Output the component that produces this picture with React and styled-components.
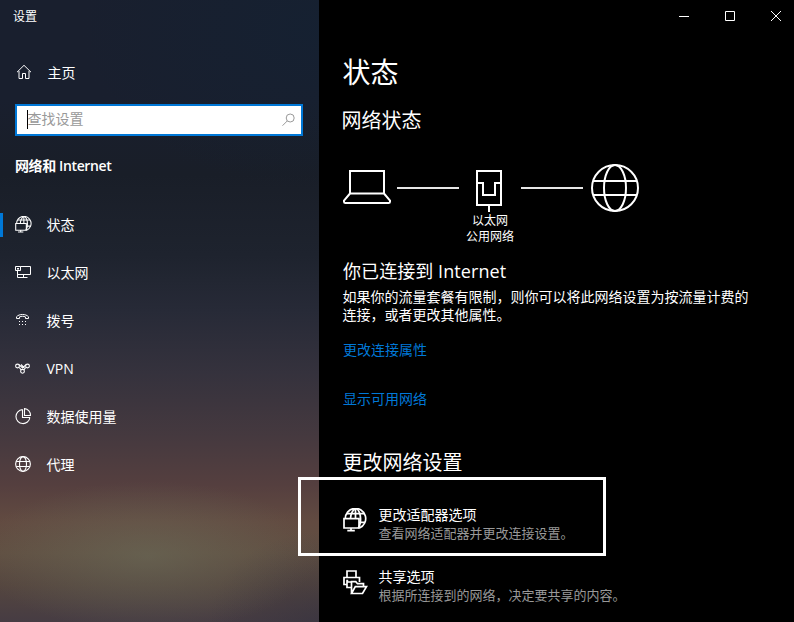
import React from "react";
import styled, { createGlobalStyle } from "styled-components";

const GlobalStyle = createGlobalStyle`
  * { box-sizing: border-box; }
  body {
    margin: 0;
    background: #000;
    overflow: hidden;
    font-family: "Open Sans", "Noto Sans CJK SC", sans-serif;
    color: #fff;
  }
  h1, h2, h3, p { margin: 0; font-weight: 400; }
`;

const Window = styled.div`
  position: relative;
  display: flex;
  width: 794px;
  height: 622px;
  overflow: hidden;
  background: #000;
`;

const Sidebar = styled.aside`
  width: 319px;
  height: 622px;
  flex: none;
  display: flex;
  flex-direction: column;
  background:
    radial-gradient(ellipse 170px 75px at 148px 556px, rgba(108, 112, 92, 0.5), rgba(108, 112, 92, 0)),
    radial-gradient(ellipse 240px 160px at 319px 30px, rgba(16, 35, 54, 0.4), rgba(16, 35, 54, 0)),
    radial-gradient(ellipse 110px 90px at 319px 622px, rgba(50, 48, 62, 0.5), rgba(50, 48, 62, 0)),
    linear-gradient(180deg, #191f2e 0%, #191f2e 16%, #191e28 28%, #1e232e 41%, #272a37 50%, #35323d 60%, #45393f 70%, #553f3f 78%, #624b41 84%, #604f42 89%, #55463f 94%, #463c43 100%);
`;

const WindowTitle = styled.div`
  height: 34px;
  padding-left: 13px;
  font-size: 12px;
  line-height: 33px;
`;

const NavItem = styled.div`
  display: flex;
  align-items: center;
  height: 48px;
  border-left: 3px solid transparent;
  padding-left: 12px;
  font-size: 14px;
  line-height: 20px;
`;

const HomeItem = styled(NavItem)`
  height: 40px;
  margin-top: 19px;
  padding-left: 13px;
`;

const ActiveMark = styled.span`
  width: 3px;
  height: 24px;
  margin-left: -15px;
  margin-right: 12px;
  margin-top: -1px;
  background: #0078d7;
`;

const NavIcon = styled.span`
  display: flex;
  width: 31.5px;
  height: 18px;
`;

const SearchBox = styled.div`
  display: flex;
  align-items: center;
  width: 288px;
  height: 32px;
  margin: 11px 0 0 15px;
  padding: 0 6px 0 10px;
  border: 2px solid #0078d7;
  background: #fff;
  color: #999;
  font-size: 14px;
`;

const Caret = styled.span`
  width: 1px;
  height: 19px;
  margin-top: -1px;
  background: #000;
`;

const Placeholder = styled.span`
  flex: 1;
  line-height: 26px;
  margin: -2px 0 0 -0.5px;
`;

const Category = styled.div`
  height: 65px;
  padding: 20px 0 0 15px;
  font-size: 14px;
  line-height: 20px;
  font-weight: 600;
  letter-spacing: -0.38px;
`;

const Nav = styled.nav`
  display: flex;
  flex-direction: column;
`;

const Main = styled.main`
  flex: 1;
  display: flex;
  flex-direction: column;
`;

const TitleBar = styled.div`
  display: flex;
  justify-content: flex-end;
  height: 32px;
  margin-right: -5px;
`;

const CaptionButton = styled.span`
  display: flex;
  align-items: center;
  justify-content: center;
  width: 46px;
  height: 32px;
`;

const Content = styled.div`
  display: flex;
  flex-direction: column;
  padding-left: 24px;
`;

const PageTitle = styled.h1`
  margin: 20px 0 0 -0.5px;
  font-size: 28px;
  line-height: 40px;
`;

const SectionTitle = styled.h2`
  height: 28px;
  margin: ${(p) => p.$gap}px 0 0 ${(p) => p.$shift || 0}px;
  font-size: 20px;
  line-height: 28px;
`;

const Diagram = styled.div`
  display: flex;
  align-items: flex-start;
  height: 94px;
  margin-top: 29px;
`;

const Link = styled.span`
  width: 62px;
  height: 2px;
  margin: 23px 0 0 ${(p) => p.$before || 0}px;
  background: #e6e6e6;
`;

const Adapter = styled.div`
  display: flex;
  flex-direction: column;
  align-items: center;
  width: 60px;
  margin-right: 2px;
  font-size: 12px;
  line-height: 16px;
  white-space: nowrap;
  text-align: center;
`;

const AdapterLabel = styled.span`
  margin: 1px 0 0 2px;
`;

const GlobeSlot = styled.span`
  display: flex;
  margin-left: 8px;
`;

const Subtitle = styled.h3`
  height: 26px;
  font-size: 18px;
  line-height: 26px;
  letter-spacing: 0.07px;
`;

const Body = styled.p`
  margin: 4px 0 0 -0.5px;
  font-size: 14px;
  line-height: 18px;
`;

const TextLink = styled.a`
  height: 20px;
  margin-top: ${(p) => p.$gap}px;
  color: #0078d7;
  font-size: 14px;
  line-height: 20px;
`;

const Options = styled.div`
  display: flex;
  flex-direction: column;
  gap: 26px;
  margin-top: 29px;
`;

const Option = styled.div`
  display: flex;
  height: 36px;
`;

const OptionIcon = styled.span`
  display: flex;
  width: 35.5px;
  padding-top: 2px;
`;

const OptionText = styled.div`
  display: flex;
  flex-direction: column;
`;

const OptionName = styled.span`
  font-size: 14px;
  line-height: 18px;
`;

const OptionNote = styled.span`
  color: #999;
  font-size: 13px;
  line-height: 18px;
`;

const Highlight = styled.div`
  position: absolute;
  left: 298px;
  top: 477px;
  width: 308px;
  height: 79px;
  border: 3px solid #fff;
`;

const Icon = ({ w = 16, h = 16, box, sw = 1, children }) => (
  <svg width={w} height={h} viewBox={box || `0 0 ${w} ${h}`} fill="none" stroke="#fff" strokeWidth={sw}>
    {children}
  </svg>
);

const StatusIcon = ({ size = 17, sw = 1.5 }) => (
  <Icon w={size} h={size} box="0 0.5 24 24" sw={sw}>
    <path d="M2.300 11.500a10.200 10.200 0 1 1 14.200 9" />
    <path d="M4 6.200h17M16 14.800h6" />
    <path d="M7.500 11C7.600 6.500 10 1.800 12.500 1.200S17.600 6 17.600 11.300c0 4-.8 7.300-2.400 9.500M12.500 1v10" />
    <path d="M1 11.200h15v9.300H1zM8 20.500v2.700M4.300 23.100h7.500" />
  </Icon>
);

const HomeIcon = () => (
  <Icon w={16} h={16}>
    <path d="M1 8.200 8 1.300l7 6.900M3 7v7.500h3.500V9.500h3v5H13V7" />
  </Icon>
);

const EthernetIcon = () => (
  <Icon w={17} h={16} box="0 -1 17 16">
    <path d="M5.500 1.500h10v8h-13M.5 1.500h5v4h-5zM2.500 5.500v7h10M8.500 9.500v3M2 3.500h2M3 3v2" />
  </Icon>
);

const DialIcon = () => (
  <Icon w={16} h={16} box="0 -1 16 16">
    <path d="M1.500 5.500V3.800C4 .7 11 .7 13.500 3.800v1.700h-3V3.900c-2-.8-4-.8-6 0v1.600z" />
    <path d="M4 8.500h1M7 8.500h1M10 8.500h1M4 11.500h1M7 11.500h1M10 11.500h1" />
  </Icon>
);

const VpnIcon = () => (
  <Icon w={16} h={16} box="0 -1 16 16" sw={1.1}>
    <circle cx="2.500" cy="5" r="1.900" />
    <circle cx="12.500" cy="5" r="1.900" />
    <circle cx="7.500" cy="10.300" r="1.900" />
    <path d="M4 3.700 7.500 7l3.500-3.300M4.200 6.500l2 2.400M10.800 6.500l-2 2.400M6 3.500l3.400 3.500" />
  </Icon>
);

const UsageIcon = () => (
  <Icon w={17} h={17} sw={1.100}>
    <path d="M7.500 1.600a7 7 0 1 0 7.400 7.900" />
    <path d="M9.500.6v6.900h6A6.500 6.500 0 0 0 9.500.6z" />
    <path d="M7.500 1.500v8h7.500" />
  </Icon>
);

const SmallGlobe = () => (
  <Icon w={17} h={17} sw={1.100}>
    <circle cx="8" cy="8" r="7.400" />
    <ellipse cx="8" cy="8" rx="3.500" ry="7.400" />
    <path d="M1.200 5.500h13.600M1.200 10.500h13.600" />
  </Icon>
);

const SearchIcon = () => (
  <Icon w={13} h={14}>
    <g stroke="#999">
      <circle cx="8.200" cy="5" r="4" />
      <path d="M5.300 7.900.5 12.700" />
    </g>
  </Icon>
);

const LaptopIcon = () => (
  <Icon w={48} h={48} sw={2}>
    <path d="M7 7h34v22.500H7zM7 29.500l-6 7v1.300q0 1.200 1.500 1.200h43q1.500 0 1.500-1.200v-1.300l-6-7" />
  </Icon>
);

const PortIcon = () => (
  <Icon w={26} h={48} sw={2}>
    <path d="M1 7h24v34H1zM1 19h6v12h12V19h6M13 41v7" />
  </Icon>
);

const LargeGlobe = () => (
  <Icon w={48} h={48} sw={2}>
    <circle cx="24" cy="24" r="23" />
    <ellipse cx="24" cy="24" rx="11" ry="23" />
    <path d="M2 17h44M2 31h44" />
  </Icon>
);

const ShareIcon = () => (
  <Icon w={25} h={25} sw={1.700}>
    <path d="M4 7V1h9v6M4 14.500H1V7.500h15.500V12M3.200 10.500h2M8 12H4v5.500h4" />
    <path d="M8.500 23.500V11.700h4.300l1.700 2h6v3M8.500 23.500l3.800-6.800h11.200l-4 6.800z" fill="#000" />
  </Icon>
);

const navItems = [
  { label: "状态", icon: <StatusIcon />, active: true },
  { label: "以太网", icon: <EthernetIcon /> },
  { label: "拨号", icon: <DialIcon /> },
  { label: "VPN", icon: <VpnIcon /> },
  { label: "数据使用量", icon: <UsageIcon /> },
  { label: "代理", icon: <SmallGlobe /> },
];

const options = [
  { name: "更改适配器选项", note: "查看网络适配器并更改连接设置。", icon: <StatusIcon size={24} sw={1.7} /> },
  { name: "共享选项", note: "根据所连接到的网络，决定要共享的内容。", icon: <ShareIcon /> },
];

export default function App() {
  return (
    <Window>
      <GlobalStyle />
      <Sidebar>
        <WindowTitle>设置</WindowTitle>
        <HomeItem>
          <NavIcon><HomeIcon /></NavIcon>
          主页
        </HomeItem>
        <SearchBox>
          <Caret />
          <Placeholder>查找设置</Placeholder>
          <SearchIcon />
        </SearchBox>
        <Category>网络和 Internet</Category>
        <Nav>
          {navItems.map((item) => (
            <NavItem key={item.label}>
              {item.active && <ActiveMark />}
              <NavIcon>{item.icon}</NavIcon>
              {item.label}
            </NavItem>
          ))}
        </Nav>
      </Sidebar>
      <Main>
        <TitleBar>
          <CaptionButton><Icon w={10} h={10}><path d="M0 5.500h10" /></Icon></CaptionButton>
          <CaptionButton><Icon w={10} h={10}><path d="M.5.5h9v9h-9z" /></Icon></CaptionButton>
          <CaptionButton><Icon w={10} h={10}><path d="m0 0 10 10M10 0 0 10" /></Icon></CaptionButton>
        </TitleBar>
        <Content>
          <PageTitle>状态</PageTitle>
          <SectionTitle $gap={15} $shift={-1.5}>网络状态</SectionTitle>
          <Diagram>
            <LaptopIcon />
            <Link $before={6} />
            <Adapter>
              <PortIcon />
              <AdapterLabel>以太网<br />公用网络</AdapterLabel>
            </Adapter>
            <Link />
            <GlobeSlot><LargeGlobe /></GlobeSlot>
          </Diagram>
          <Subtitle>你已连接到 Internet</Subtitle>
          <Body>
            如果你的流量套餐有限制，则你可以将此网络设置为按流量计费的
            <br />
            连接，或者更改其他属性。
          </Body>
          <TextLink $gap={16}>更改连接属性</TextLink>
          <TextLink $gap={29}>显示可用网络</TextLink>
          <SectionTitle $gap={40} $shift={-0.5}>更改网络设置</SectionTitle>
          <Options>
            {options.map((o) => (
              <Option key={o.name}>
                <OptionIcon>{o.icon}</OptionIcon>
                <OptionText>
                  <OptionName>{o.name}</OptionName>
                  <OptionNote>{o.note}</OptionNote>
                </OptionText>
              </Option>
            ))}
          </Options>
        </Content>
      </Main>
      <Highlight />
    </Window>
  );
}
